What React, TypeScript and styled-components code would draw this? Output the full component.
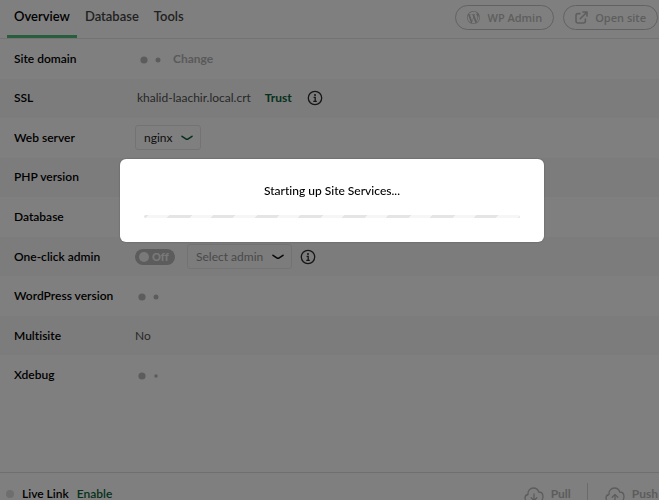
import React from "react";
import styled, { createGlobalStyle } from "styled-components";
import { SiWordpress } from "react-icons/si";

const GlobalStyle = createGlobalStyle`
  *, *::before, *::after { box-sizing: border-box; }
  body {
    margin: 0;
    font-family: Lato, "Open Sans", sans-serif;
    font-size: 12px;
    font-variant-ligatures: none;
    line-height: 16px;
    color: #000;
    background: #fff;
  }
  button, select, input { font: inherit; color: inherit; margin: 0; }
`;

const Page = styled.div`
  display: flex;
  flex-direction: column;
  min-height: 100vh;
  overflow: hidden;
`;

const TopBar = styled.header`
  display: flex;
  align-items: stretch;
  justify-content: space-between;
  height: 39px;
  padding: 0 1px 0 7px;
  border-bottom: 1px solid #e7e7e7;
`;

const Tabs = styled.nav`
  display: flex;
  gap: 1px;
`;

const Tab = styled.button<{ $active?: boolean }>`
  padding: 0 7px 3px;
  border: 0;
  border-bottom: 3px solid ${(p) => (p.$active ? "#51bb7b" : "transparent")};
  background: none;
  font-size: 13px;
  font-weight: 600;
  color: ${(p) => (p.$active ? "#000" : "#444")};
`;

const Actions = styled.div`
  display: flex;
  align-items: flex-start;
  gap: 9px;
  padding-top: 5px;
`;

const PillButton = styled.button`
  display: flex;
  align-items: center;
  gap: 7px;
  height: 25px;
  padding: 0 11px;
  border: 1px solid #c4c4c4;
  border-radius: 13px;
  background: none;
  font-family: "Open Sans", sans-serif;
  font-size: 11px;
  font-weight: 600;
  color: #bdbdbd;
`;

const Settings = styled.main`
  display: grid;
  grid-template-rows: repeat(9, 1fr);
  height: 356px;
`;

const Row = styled.div`
  display: grid;
  grid-template-columns: 121px 1fr;
  align-items: center;
  padding: 0 14px;
  &:nth-child(even) { background: #f9f9f9; }
`;

const RowLabel = styled.span`
  font-weight: 600;
`;

const RowValue = styled.div<{ $inset?: boolean }>`
  display: flex;
  align-items: center;
  padding-left: ${(p) => (p.$inset ? 2 : 0)}px;
  color: #505050;
`;

const CertName = styled.span`
  padding-right: 14px;
`;

const LinkButton = styled.button<{ $muted?: boolean }>`
  padding: 0;
  border: 0;
  background: none;
  font-weight: 700;
  color: ${(p) => (p.$muted ? "#b4b4b4" : "#0b6338")};
`;

const IconButton = styled.button<{ $gap?: number }>`
  display: flex;
  padding: 0;
  border: 0;
  margin-left: ${(p) => p.$gap ?? 8}px;
  background: none;
  color: #2a2a2a;
`;

const SelectBox = styled.span<{ $muted?: boolean }>`
  display: grid;
  align-items: center;
  width: ${(p) => (p.$muted ? 105 : 66)}px;
  height: 25px;
  border: 1px solid #e6e6e6;
  border-radius: 3px;
  color: ${(p) => (p.$muted ? "#939393" : "#222")};
  select, svg { grid-area: 1 / 1; }
  svg {
    justify-self: end;
    margin-right: 7px;
    color: ${(p) => (p.$muted ? "#111" : "#0b6338")};
    pointer-events: none;
  }
`;

const Select = styled.select`
  width: 100%;
  height: 100%;
  padding: 0 8px;
  border: 0;
  appearance: none;
  background: none;
`;

const Switch = styled.label`
  display: grid;
  align-items: center;
  width: 40px;
  height: 16px;
  margin-right: 12px;
  border-radius: 8px;
  background: #b8b8b8;
  color: #f2f2f2;
  font-size: 11px;
  font-weight: 900;
  span { grid-area: 1 / 1; padding-left: 17px; }
`;

const SwitchInput = styled.input`
  grid-area: 1 / 1;
  width: 10px;
  height: 10px;
  && { margin: 0 0 0 4px; }
  border-radius: 50%;
  appearance: none;
  background: #f2f2f2;
`;

const Dots = styled.span`
  display: flex;
  padding: 2px 8px 0 2px;
`;

const Spacer = styled.div`
  flex: 1;
`;

const Footer = styled.footer`
  display: flex;
  align-items: flex-start;
  justify-content: space-between;
  height: 28px;
  padding: 0 1px 0 6px;
  border-top: 1px solid #dedede;
  line-height: 12px;
  overflow: hidden;
`;

const LiveLink = styled.div`
  display: flex;
  align-items: center;
  gap: 8px;
  padding-top: 15px;
  font-weight: 600;
  ${LinkButton} { font-weight: 600; }
`;

const StatusDot = styled.span`
  width: 8px;
  height: 8px;
  border-radius: 50%;
  background: #dcdcdc;
`;

const SyncActions = styled.div`
  display: flex;
  padding-top: 10px;
`;

const SyncButton = styled.button`
  display: flex;
  align-items: center;
  gap: 7px;
  height: 22px;
  padding: 0 0 0 17px;
  border: 0;
  background: none;
  font-weight: 700;
  color: #b8b8b8;
  & + & {
    border-left: 1px solid #d4d4d4;
    margin-left: 16px;
  }
`;

const Overlay = styled.div`
  position: fixed;
  inset: 0;
  display: flex;
  justify-content: center;
  align-items: flex-start;
  padding: 159px 16px 16px 21px;
  background: rgba(0, 0, 0, 0.5);
`;

const Dialog = styled.div`
  flex: 0 1 424px;
  padding: 24px;
  border-radius: 6px;
  background: #fff;
  box-shadow: 0 0 2px rgba(0, 0, 0, 0.3);
`;

const DialogText = styled.p`
  margin: 0 0 16px;
  font-weight: 500;
  text-align: center;
`;

const StripedBar = styled.div`
  height: 3px;
  border-radius: 2px;
  background: repeating-linear-gradient(
    135deg,
    #e5e5e5 0 3px,
    #f6f6f6 3px 18px,
    #e5e5e5 18px 31px
  );
`;

const InfoIcon = () => (
  <svg width="16" height="16" viewBox="0 0 16 16" fill="none" stroke="currentColor">
    <circle cx="8" cy="8" r="6.7" strokeWidth="1.3" />
    <circle cx="8" cy="4.9" r="1" fill="currentColor" stroke="none" />
    <path d="M6.6 7.4H8.2V11.2M6.3 11.3H9.8" strokeWidth="1.3" />
  </svg>
);

const Chevron = () => (
  <svg width="12" height="6" viewBox="0 0 12 6" fill="none" stroke="currentColor" strokeWidth="1.6" strokeLinecap="round" strokeLinejoin="round">
    <path d="M1 1.3L4.8 3.8Q6 4.6 7.2 3.8L11 1.3" />
  </svg>
);

const ExternalIcon = () => (
  <svg width="13" height="13" viewBox="0 0 13 13" fill="none" stroke="currentColor" strokeWidth="1.6" strokeLinecap="round" strokeLinejoin="round">
    <path d="M5 2.6H3Q1 2.6 1 4.6V10Q1 12 3 12H8.4Q10.4 12 10.4 10V8M7.9 1H12V5.1M11.8 1.2L5.2 7.8" />
  </svg>
);

const CloudIcon = ({ up }: { up?: boolean }) => (
  <svg width="20" height="20" viewBox="0 -3 20 20" fill="none" stroke="currentColor" strokeWidth="1.3" strokeLinecap="round" strokeLinejoin="round">
    <path d="M6 14.5H4.5C2.3 14.5 1 12.7 1 11C1 9.2 2.3 7.8 4 7.5C3.6 4 6 1 9.4 1C12 1 14.1 2.5 14.7 5C17.3 5 19 7 19 9.7C19 12.5 17.1 14.5 14.8 14.5H14" />
    <path d={up ? "M10 16V7.5M7.2 10.2L10 7.4L12.8 10.2" : "M10 7V13.4M7.2 10.8L10 13.6L12.8 10.8"} />
  </svg>
);

const LoadingDots = ({ small = 2.5 }: { small?: number }) => (
  <Dots role="status" aria-label="Loading">
    <svg width="26" height="8" viewBox="0 0 26 8" fill="#b8b8b8">
      <circle cx="5" cy="4" r="3.6" />
      <circle cx="19" cy="4" r={small} />
    </svg>
  </Dots>
);

interface SettingRowProps {
  label: string;
  inset?: boolean;
  children?: React.ReactNode;
}

const SettingRow = ({ label, inset, children }: SettingRowProps) => (
  <Row>
    <RowLabel>{label}</RowLabel>
    <RowValue $inset={inset}>{children}</RowValue>
  </Row>
);

export default function App() {
  return (
    <>
      <GlobalStyle />
      <Page>
        <TopBar>
          <Tabs>
            <Tab $active>Overview</Tab>
            <Tab>Database</Tab>
            <Tab>Tools</Tab>
          </Tabs>
          <Actions>
            <PillButton>
              <SiWordpress size={13} />
              WP Admin
            </PillButton>
            <PillButton>
              <ExternalIcon />
              Open site
            </PillButton>
          </Actions>
        </TopBar>
        <Settings>
          <SettingRow label="Site domain" inset>
            <LoadingDots />
            <LinkButton $muted>Change</LinkButton>
          </SettingRow>
          <SettingRow label="SSL" inset>
            <CertName>khalid-laachir.local.crt</CertName>
            <LinkButton>Trust</LinkButton>
            <IconButton $gap={15} aria-label="About SSL"><InfoIcon /></IconButton>
          </SettingRow>
          <SettingRow label="Web server">
            <SelectBox>
              <Select aria-label="Web server"><option>nginx</option></Select>
              <Chevron />
            </SelectBox>
          </SettingRow>
          <SettingRow label="PHP version" />
          <SettingRow label="Database" />
          <SettingRow label="One-click admin">
            <Switch>
              <SwitchInput type="checkbox" role="switch" aria-label="One-click admin" />
              <span>Off</span>
            </Switch>
            <SelectBox $muted>
              <Select aria-label="Admin user"><option>Select admin</option></Select>
              <Chevron />
            </SelectBox>
            <IconButton aria-label="About one-click admin"><InfoIcon /></IconButton>
          </SettingRow>
          <SettingRow label="WordPress version"><LoadingDots /></SettingRow>
          <SettingRow label="Multisite">No</SettingRow>
          <SettingRow label="Xdebug"><LoadingDots small={1.8} /></SettingRow>
        </Settings>
        <Spacer />
        <Footer>
          <LiveLink>
            <StatusDot />
            <span>Live Link</span>
            <LinkButton>Enable</LinkButton>
          </LiveLink>
          <SyncActions>
            <SyncButton><CloudIcon />Pull</SyncButton>
            <SyncButton><CloudIcon up />Push</SyncButton>
          </SyncActions>
        </Footer>
      </Page>
      <Overlay>
        <Dialog role="dialog" aria-modal="true" aria-labelledby="startup-message">
          <DialogText id="startup-message">Starting up Site Services...</DialogText>
          <StripedBar role="progressbar" aria-labelledby="startup-message" />
        </Dialog>
      </Overlay>
    </>
  );
}
